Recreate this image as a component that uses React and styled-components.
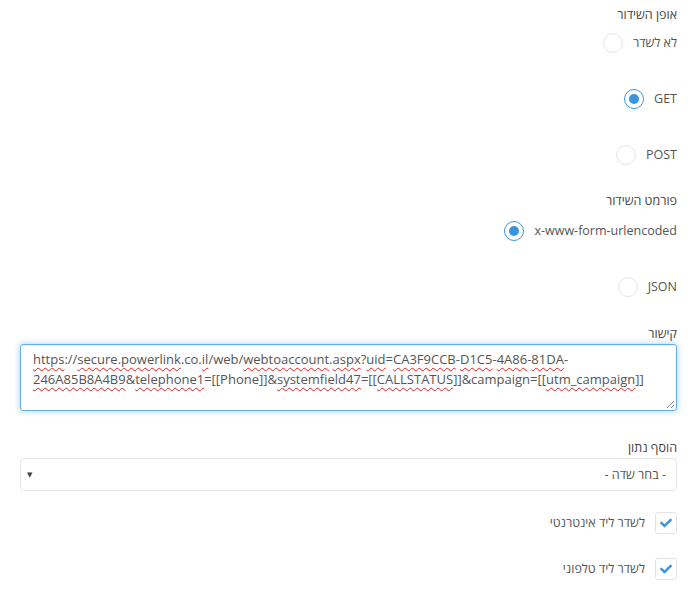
import React from 'react'
import styled, { createGlobalStyle } from 'styled-components'
import { FaCheck } from 'react-icons/fa'

const GlobalStyle = createGlobalStyle`
  html, body {
    margin: 0;
    padding: 0;
    background: #ffffff;
  }
  body {
    font-family: "Open Sans", "DejaVu Sans", sans-serif;
    font-size: 12.5px;
    color: #555555;
  }
`

const Page = styled.div`
  direction: rtl;
  padding: 5px 17px 20px 20px;
  display: flex;
  flex-direction: column;
`

const FieldLabel = styled.div`
  height: 20px;
  line-height: 20px;
  color: #444;
  margin-top: ${p => p.$top || 0}px;
`

const RadioList = styled.div`
  display: flex;
  flex-direction: column;
  gap: 36px;
  margin-top: ${p => p.$top || 8}px;
`

const Row = styled.label`
  display: flex;
  align-items: center;
  gap: 10px;
  height: 20px;
  line-height: 20px;
  color: #555;
  cursor: pointer;
`

const RadioCircle = styled.span`
  box-sizing: border-box;
  width: 20px;
  height: 20px;
  border-radius: 50%;
  border: ${p => (p.$checked ? '1.5px solid #3d96dc' : '1px solid #e3e3e3')};
  display: flex;
  align-items: center;
  justify-content: center;

  &::after {
    content: '';
    display: ${p => (p.$checked ? 'block' : 'none')};
    width: 10px;
    height: 10px;
    border-radius: 50%;
    background: #3a95dd;
  }
`

const TextBox = styled.div`
  position: relative;
  box-sizing: border-box;
  height: 67px;
  direction: ltr;
  text-align: left;
  padding: 4px 12px;
  line-height: 20px;
  font-size: 13px;
  color: #555;
  border: 1px solid #66afe9;
  border-radius: 3px;
  box-shadow: inset 0 1px 1px rgba(0, 0, 0, 0.075), 0 0 6px rgba(102, 175, 233, 0.6);
  word-break: break-all;
`

const Misspelled = styled.span`
  text-decoration: underline wavy #e02020;
  text-decoration-thickness: 1px;
  text-underline-offset: 3px;
`

const Grip = styled.svg`
  position: absolute;
  right: 2px;
  bottom: 2px;
`

const Select = styled.div`
  box-sizing: border-box;
  height: 33px;
  border: 1px solid #e6e6e6;
  border-radius: 4px;
  display: flex;
  align-items: center;
  justify-content: space-between;
  padding: 0 10px 0 6px;
  color: #555;
`

const Arrow = styled.span`
  font-size: 7px;
  color: #444;
`

const CheckList = styled.div`
  display: flex;
  flex-direction: column;
  gap: 24px;
  margin-top: 21px;
`

const CheckBox = styled.span`
  box-sizing: border-box;
  width: 22px;
  height: 22px;
  border: 1px solid #e3e3e3;
  border-radius: 3px;
  display: flex;
  align-items: center;
  justify-content: center;
  color: #3a95dd;
`

const CheckRow = styled(Row)`
  height: 22px;
`

function Radio({ label, checked }) {
  return (
    <Row>
      <span>{label}</span>
      <RadioCircle $checked={checked} />
    </Row>
  )
}

function Check({ label }) {
  return (
    <CheckRow>
      <CheckBox>
        <FaCheck size={12} />
      </CheckBox>
      <span>{label}</span>
    </CheckRow>
  )
}

const M = Misspelled

export default function App() {
  return (
    <>
      <GlobalStyle />
      <Page>
        <FieldLabel>אופן השידור</FieldLabel>
        <RadioList>
          <Radio label="לא לשדר" />
          <Radio label="GET" checked />
          <Radio label="POST" />
        </RadioList>

        <FieldLabel $top={26}>פורמט השידור</FieldLabel>
        <RadioList $top={10}>
          <Radio label="x-www-form-urlencoded" checked />
          <Radio label="JSON" />
        </RadioList>

        <FieldLabel $top={27}>קישור</FieldLabel>
        <TextBox>
          <M>https</M>://<M>secure.powerlink</M>.co.<M>il</M>/web/<M>webtoaccount</M>.<M>aspx</M>?<M>uid</M>=<M>CA3F9CCB</M>-<M>D1C5</M>-<M>4A86</M>-<M>81DA</M>-
          <br />
          <M>246A85B8A4B9</M>&amp;<M>telephone1</M>=[[Phone]]&amp;<M>systemfield47</M>=[[<M>CALLSTATUS</M>]]&amp;campaign=[[<M>utm_campaign</M>]]
          <Grip width="8" height="8" viewBox="0 0 8 8">
            <path d="M8 1 L1 8 M8 5 L5 8" stroke="#888" strokeWidth="1" />
          </Grip>
        </TextBox>

        <FieldLabel $top={27}>הוסף נתון</FieldLabel>
        <Select>
          <span>- בחר שדה -</span>
          <Arrow>▼</Arrow>
        </Select>

        <CheckList>
          <Check label="לשדר ליד אינטרנטי" />
          <Check label="לשדר ליד טלפוני" />
        </CheckList>
      </Page>
    </>
  )
}
